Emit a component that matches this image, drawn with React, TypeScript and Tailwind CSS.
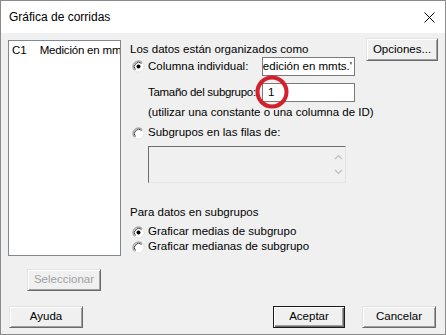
import React from "react";

const font = { fontFamily: '"Liberation Sans", Arial, sans-serif' };

function Radio({ checked }: { checked?: boolean }) {
  return (
    <svg width="13" height="13" viewBox="0 0 13 13" className="shrink-0">
      <circle cx="6.5" cy="6.5" r="5.5" fill="#ffffff" />
      <path d="M2.6 10.4 A5.5 5.5 0 0 1 10.4 2.6" fill="none" stroke="#808080" strokeWidth="1" />
      <path d="M3.4 9.6 A4.4 4.4 0 0 1 9.6 3.4" fill="none" stroke="#404040" strokeWidth="1" />
      <path d="M10.4 2.6 A5.5 5.5 0 0 1 2.6 10.4" fill="none" stroke="#e3e3e3" strokeWidth="1" />
      {checked && <circle cx="6.5" cy="6.5" r="2" fill="#000000" />}
    </svg>
  );
}

function Btn({
  children,
  className = "",
  disabled,
  primary,
}: {
  children: React.ReactNode;
  className?: string;
  disabled?: boolean;
  primary?: boolean;
}) {
  return (
    <div
      className={
        "flex items-center justify-center whitespace-nowrap bg-[#f0f0f0] text-[11.5px] " +
        (primary
          ? "border border-[#1a1a1a] shadow-[inset_1px_1px_0_#ffffff,inset_-1px_-1px_0_#696969,inset_-2px_-2px_0_#a0a0a0] "
          : "border border-t-[#e3e3e3] border-l-[#e3e3e3] border-r-[#696969] border-b-[#696969] shadow-[inset_1px_1px_0_#ffffff,inset_-1px_-1px_0_#a0a0a0] ") +
        (disabled ? "text-[#a0a0a0] " : "text-black ") +
        className
      }
    >
      {children}
    </div>
  );
}

export default function App() {
  return (
    <div style={font} className="flex h-[335px] w-[446px] flex-col whitespace-nowrap border border-[#8a8a8a] bg-[#f0f0f0] text-[11.5px] text-black">
      {/* Title bar */}
      <div className="flex h-[32px] shrink-0 items-center justify-between bg-white pl-[8px] pr-[10px]">
        <span className="text-[12px]">Gráfica de corridas</span>
        <svg width="11" height="11" viewBox="0 0 11 11">
          <path d="M0.5 0.5 L10.5 10.5 M10.5 0.5 L0.5 10.5" stroke="#000" strokeWidth="1" />
        </svg>
      </div>

      <div className="flex flex-1 flex-col pl-[7px] pr-[7px]">
        <div className="flex">
          {/* Left: column list */}
          <div className="flex w-[113px] shrink-0 flex-col">
            <div className="mt-[7px] h-[216px] overflow-hidden border border-[#828790] bg-white">
              <div className="mt-[2px] flex leading-[15px]">
                <span className="pl-[3px]">C1</span>
                <span className="pl-[13px] tracking-[-0.2px]">Medición en mmts.</span>
              </div>
            </div>
            <Btn disabled className="ml-[19px] mt-[13px] h-[22px] w-[74px]">
              Seleccionar
            </Btn>
          </div>

          {/* Right: options */}
          <div className="ml-[9px] flex flex-1">
            <div className="flex w-[225px] shrink-0 flex-col">
              <div className="mt-[8px] h-[16px] leading-[16px]">Los datos están organizados como</div>

              <div className="flex h-[19px] items-center">
                <div className="ml-[2px]">
                  <Radio checked />
                </div>
                <span className="ml-[3px]">Columna individual:</span>
                <div className="relative ml-auto flex h-[19px] w-[93px] items-center justify-end overflow-hidden border border-[#7a7a7a] bg-white pr-[2px]">
                  <span>'Medición en mmts.'</span>
                </div>
              </div>

              <div className="mt-[7px] flex h-[19px] items-center">
                <span className="ml-[18px] tracking-[-0.3px]">Tamaño del subgrupo:</span>
                <div className="relative ml-auto flex h-[19px] w-[93px] shrink-0 items-center border border-[#7a7a7a] bg-white pl-[5px]">
                  1
                  <svg
                    width="36"
                    height="36"
                    viewBox="0 0 36 36"
                    className="pointer-events-none absolute left-[-9px] top-[-10px]"
                  >
                    <circle cx="18" cy="18" r="14.5" fill="none" stroke="#d4202a" strokeWidth="4" />
                  </svg>
                </div>
              </div>

              <div className="ml-[18px] mt-[3px] h-[15px] leading-[15px]">
                (utilizar una constante o una columna de ID)
              </div>

              <div className="mt-[5px] flex h-[16px] items-center">
                <div className="ml-[2px]">
                  <Radio />
                </div>
                <span className="ml-[3px]">Subgrupos en las filas de:</span>
              </div>

              <div className="ml-[18px] mt-[5px] flex h-[37px] w-[198px] justify-end border border-b-[#e3e3e3] border-l-[#6d6d6d] border-r-[#e3e3e3] border-t-[#6d6d6d] bg-[#f0f0f0]">
                <div className="flex w-[14px] flex-col items-center justify-around py-[2px]">
                  <svg width="9" height="6" viewBox="0 0 9 6">
                    <path d="M1 5 L4.5 1.5 L8 5" fill="none" stroke="#bfbfbf" strokeWidth="1.2" />
                  </svg>
                  <svg width="9" height="6" viewBox="0 0 9 6">
                    <path d="M1 1 L4.5 4.5 L8 1" fill="none" stroke="#bfbfbf" strokeWidth="1.2" />
                  </svg>
                </div>
              </div>

              <div className="mt-[21px] h-[16px] leading-[16px]">Para datos en subgrupos</div>

              <div className="mt-[4px] flex h-[16px] items-center">
                <div className="ml-[2px]">
                  <Radio checked />
                </div>
                <span className="ml-[3px]">Graficar medias de subgrupo</span>
              </div>
              <div className="flex h-[14px] items-center">
                <div className="ml-[2px]">
                  <Radio />
                </div>
                <span className="ml-[3px]">Graficar medianas de subgrupo</span>
              </div>
            </div>

            <Btn className="ml-auto mt-[5px] h-[23px] w-[72px]">Opciones...</Btn>
          </div>
        </div>

        {/* Bottom buttons */}
        <div className="mt-[15px] flex">
          <Btn className="ml-[1px] h-[22px] w-[74px]">Ayuda</Btn>
          <Btn primary className="ml-auto h-[22px] w-[72px]">
            Aceptar
          </Btn>
          <Btn className="ml-[17px] mr-[2px] h-[22px] w-[74px]">Cancelar</Btn>
        </div>
      </div>
    </div>
  );
}
